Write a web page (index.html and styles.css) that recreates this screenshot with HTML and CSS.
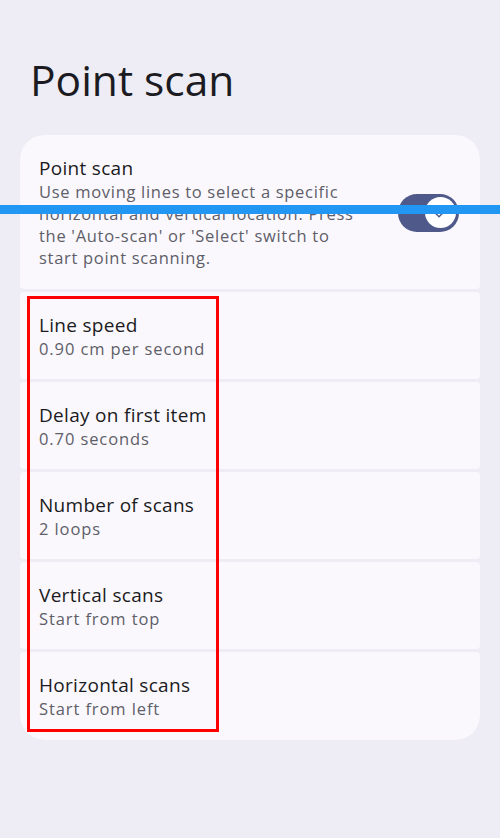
FILE: index.html
```html
<!DOCTYPE html>
<html>
<head>
<meta charset="utf-8">
<link rel="stylesheet" href="styles.css">
</head>
<body>
<div class="page">
  <h1 class="title">Point scan</h1>
  <div class="card">
    <div class="item item-first">
      <div class="text">
        <div class="item-title">Point scan</div>
        <div class="item-sub">Use moving lines to select a specific horizontal and vertical location. Press the 'Auto-scan' or 'Select' switch to start point scanning.</div>
      </div>
      <div class="switch">
        <div class="thumb">
          <svg width="16" height="16" viewBox="0 0 24 24"><path d="M9 16.2 4.8 12l-1.4 1.4L9 19 21 7l-1.4-1.4z" fill="#4f5a8b"/></svg>
        </div>
      </div>
    </div>
    <div class="item">
      <div class="item-title">Line speed</div>
      <div class="item-sub">0.90 cm per second</div>
    </div>
    <div class="item">
      <div class="item-title">Delay on first item</div>
      <div class="item-sub">0.70 seconds</div>
    </div>
    <div class="item">
      <div class="item-title">Number of scans</div>
      <div class="item-sub">2 loops</div>
    </div>
    <div class="item">
      <div class="item-title">Vertical scans</div>
      <div class="item-sub">Start from top</div>
    </div>
    <div class="item item-last">
      <div class="item-title">Horizontal scans</div>
      <div class="item-sub">Start from left</div>
    </div>
  </div>
  <div class="scan-line"></div>
  <div class="highlight"></div>
</div>
</body>
</html>
```
FILE: styles.css
```css
html, body {
  margin: 0;
  padding: 0;
}
body {
  background: #eeedf5;
  font-family: "Open Sans", "Noto Sans", sans-serif;
  width: 500px;
  height: 838px;
  overflow: hidden;
}
.page {
  position: relative;
  padding: 0 20px;
  height: 838px;
}
.title {
  margin: 0;
  padding: 55px 0 0 10px;
  height: 80px;
  font-weight: 400;
  font-size: 42.5px;
  line-height: 50px;
  color: #1b1b21;
}
.card {
  display: flex;
  flex-direction: column;
  gap: 3px;
  border-radius: 24px;
  overflow: hidden;
}
.item {
  background: #faf8fd;
  border-radius: 4px;
  padding: 21px 19px 0;
  height: 66px;
}
.item-first {
  display: flex;
  align-items: center;
  gap: 24px;
  height: auto;
  padding: 21px 19px 20px;
  border-radius: 24px 24px 4px 4px;
}
.item-last {
  border-radius: 4px 4px 24px 24px;
  height: 67px;
}
.text {
  flex: 1;
}
.item-title {
  font-size: 19px;
  line-height: 25px;
  color: #1b1b21;
  letter-spacing: 0.3px;
}
.item-sub {
  font-size: 16.5px;
  line-height: 22px;
  color: #5e5e68;
  letter-spacing: 0.9px;
}
.item-first .item-sub {
  max-width: 330px;
  letter-spacing: 0.7px;
}
.switch {
  flex: none;
  width: 61px;
  height: 38px;
  border-radius: 19px;
  background: #4f5a8b;
  display: flex;
  align-items: center;
  justify-content: flex-end;
  padding-right: 3px;
  box-sizing: border-box;
  margin-right: 2px;
}
.thumb {
  width: 31px;
  height: 31px;
  border-radius: 50%;
  background: #ffffff;
  display: flex;
  align-items: center;
  justify-content: center;
}
.scan-line {
  position: absolute;
  left: 0;
  top: 205px;
  width: 500px;
  height: 9px;
  background: #2196f3;
}
.highlight {
  position: absolute;
  left: 27px;
  top: 296px;
  width: 186px;
  height: 430px;
  border: 3px solid #ff0000;
}
```
